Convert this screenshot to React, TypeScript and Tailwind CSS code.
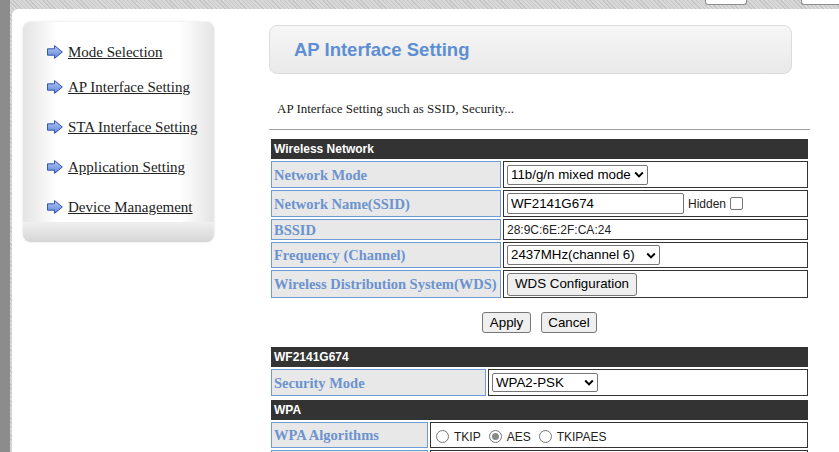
import React from 'react';

const sans = "font-['Liberation_Sans',Arial,sans-serif]";
const serif = "font-['Liberation_Serif','Times_New_Roman',serif]";

function Arrow() {
  return (
    <svg width="16" height="14" viewBox="0 0 16 14" className="shrink-0">
      <defs>
        <linearGradient id="arr" x1="0" y1="0" x2="0" y2="1">
          <stop offset="0" stopColor="#afc8f2" />
          <stop offset="1" stopColor="#5f84d8" />
        </linearGradient>
      </defs>
      <polygon points="0.5,3.8 7.5,3.8 7.5,0.6 15.4,7 7.5,13.4 7.5,10.2 0.5,10.2" fill="url(#arr)" stroke="#3556b3" strokeWidth="1" />
    </svg>
  );
}

function Chevron() {
  return (
    <svg width="10" height="7" viewBox="0 0 10 7" className="shrink-0">
      <path d="M1.2 1.5l3.8 3.8 3.8-3.8" stroke="#000" strokeWidth="1.9" fill="none" />
    </svg>
  );
}

function FakeSelect({ value, className }: { value: string; className: string }) {
  return (
    <div
      className={`inline-flex items-center justify-between border border-[#767676] rounded-[2px] bg-white pl-[3px] pr-[3px] text-[13.33px] text-black ${sans} ${className}`}
    >
      <span className="whitespace-nowrap">{value}</span>
      <Chevron />
    </div>
  );
}

function Radio({ checked, label }: { checked?: boolean; label: string }) {
  return (
    <span className="inline-flex items-center mr-[3px]">
      <span className="w-[13px] h-[13px] rounded-full border border-[#767676] bg-white flex items-center justify-center ml-[5px] mr-[5px]">
        {checked && <span className="w-[7px] h-[7px] rounded-full bg-[#8a8a8a]" />}
      </span>
      <span className="text-[12px]">{label}</span>
    </span>
  );
}

const labelCell = `bg-[#e8e8e8] border border-[#6d9bd8] ${serif} font-bold text-[14.5px] leading-[16px] text-[#6b93cf] pl-[2px] align-middle whitespace-nowrap`;
const valueCell = `border border-[#333] bg-white pl-[3px] align-middle leading-[16px] ${sans}`;
const headCell = `bg-[#333] text-white font-bold text-[12px] leading-[14px] ${sans} pl-[3px] align-middle`;

const menu = [
  { text: 'Mode Selection', mt: 'mt-[20px]' },
  { text: 'AP Interface Setting', mt: 'mt-[15px]' },
  { text: 'STA Interface Setting', mt: 'mt-[20px]' },
  { text: 'Application Setting', mt: 'mt-[20px]' },
  { text: 'Device Management', mt: 'mt-[20px]' },
];

export default function App() {
  return (
    <div className="h-[452px] w-full overflow-hidden flex bg-white">
      {/* left bar */}
      <div className="w-[10px] shrink-0 bg-[#8c8c8c]" />

      <div className="flex-1 min-w-0 flex flex-col bg-[repeating-linear-gradient(45deg,#c6c6c6_0px,#c6c6c6_1px,#d8d8d8_1px,#d8d8d8_3px)]">
        {/* top strip */}
        <div className="h-[9px] shrink-0 flex justify-end items-start">
          <div className="w-[42px] h-[5px] bg-white border border-t-0 border-[#8f8f8f] rounded-b-[3px] mr-[54px]" />
          <div className="w-[38px] h-[5px] bg-white border border-t-0 border-r-0 border-[#8f8f8f] rounded-bl-[3px]" />
        </div>

        {/* page */}
        <div className="flex-1 min-h-0 overflow-hidden bg-white rounded-tl-[6px] ml-[2px] flex items-start">
          {/* sidebar */}
          <div className="ml-[11px] mt-[13px] w-[191px] h-[220px] rounded-[8px] overflow-hidden shrink-0 flex flex-col bg-[#e9e9e9] shadow-[0_0_3px_rgba(0,0,0,0.12)]">
            <div className="h-[200px] bg-[linear-gradient(to_right,#e4e4e4,#ffffff_18%,#ffffff_82%,#e4e4e4)] flex flex-col">
              {menu.map((m) => (
                <div key={m.text} className={`${m.mt} h-[20px] flex items-center pl-[24px]`}>
                  <Arrow />
                  <a href="#" className={`ml-[5px] ${serif} text-[15px] leading-[20px] text-[#222] underline whitespace-nowrap`}>
                    {m.text}
                  </a>
                </div>
              ))}
            </div>
            <div className="flex-1 bg-[linear-gradient(to_bottom,#efefef,#d6d6d6)]" />
          </div>

          {/* content */}
          <div className="ml-[55px] mt-[16px] w-[541px] shrink-0">
            <div className="w-[523px] h-[49px] rounded-[8px] border border-[#dcdcdc] bg-[linear-gradient(to_bottom,#f6f6f6,#e9e9e9)] flex items-center pl-[24px]">
              <h1 className={`${sans} font-bold text-[18.5px] text-[#5e8fd2]`}>AP Interface Setting</h1>
            </div>

            <p className={`mt-[27px] h-[16px] leading-[16px] pl-[8px] ${serif} text-[13px] text-[#222]`}>
              AP Interface Setting such as SSID, Security...
            </p>
            <div className="mt-[12px] border-t border-[#a0a0a0]" />

            {/* Wireless Network */}
            <table className="mt-[7px] w-[541px] border-separate border-spacing-[2px]">
              <tbody>
                <tr>
                  <td colSpan={2} className={`${headCell} h-[20px]`}>Wireless Network</td>
                </tr>
                <tr>
                  <td className={`${labelCell} w-[230px] h-[27px]`}>Network Mode</td>
                  <td className={`${valueCell} h-[27px]`}>
                    <FakeSelect value="11b/g/n mixed mode" className="w-[141px] h-[20px]" />
                  </td>
                </tr>
                <tr>
                  <td className={`${labelCell} h-[27px]`}>Network Name(SSID)</td>
                  <td className={`${valueCell} h-[27px]`}>
                    <div className="flex items-center">
                      <input
                        readOnly
                        value="WF2141G674"
                        className={`w-[177px] h-[21px] border border-[#767676] rounded-[2px] px-[3px] text-[13.33px] ${sans} text-black`}
                      />
                      <span className="ml-[4px] text-[12px] text-[#222]">Hidden</span>
                      <span className="ml-[4px] w-[13px] h-[13px] border border-[#767676] rounded-[2px] bg-white" />
                    </div>
                  </td>
                </tr>
                <tr>
                  <td className={`${labelCell} h-[21px]`}>BSSID</td>
                  <td className={`${valueCell} h-[21px] text-[12px] text-[#222]`}>28:9C:6E:2F:CA:24</td>
                </tr>
                <tr>
                  <td className={`${labelCell} h-[26px]`}>Frequency (Channel)</td>
                  <td className={`${valueCell} h-[26px]`}>
                    <FakeSelect value="2437MHz(channel 6)" className="w-[153px] h-[20px]" />
                  </td>
                </tr>
                <tr>
                  <td className={`${labelCell} h-[28px]`}>Wireless Distribution System(WDS)</td>
                  <td className={`${valueCell} h-[28px]`}>
                    <button className={`w-[130px] h-[23px] bg-[#efefef] border border-[#767676] rounded-[3px] text-[13.33px] ${sans} text-black`}>
                      WDS Configuration
                    </button>
                  </td>
                </tr>
              </tbody>
            </table>

            <div className="mt-[12px] flex justify-center gap-[10px]">
              <button className={`w-[49px] h-[21px] bg-[#efefef] border border-[#767676] rounded-[3px] text-[13.33px] ${sans} text-black`}>
                Apply
              </button>
              <button className={`w-[56px] h-[21px] bg-[#efefef] border border-[#767676] rounded-[3px] text-[13.33px] ${sans} text-black`}>
                Cancel
              </button>
            </div>

            {/* SSID security */}
            <table className="mt-[12px] w-[541px] border-separate border-spacing-[2px]">
              <tbody>
                <tr>
                  <td colSpan={2} className={`${headCell} h-[20px]`}>WF2141G674</td>
                </tr>
                <tr>
                  <td className={`${labelCell} w-[215px] h-[27px]`}>Security Mode</td>
                  <td className={`${valueCell} h-[27px]`}>
                    <FakeSelect value="WPA2-PSK" className="w-[106px] h-[19px]" />
                  </td>
                </tr>
              </tbody>
            </table>

            {/* WPA */}
            <table className="w-[541px] border-separate border-spacing-[2px]">
              <tbody>
                <tr>
                  <td colSpan={2} className={`${headCell} h-[20px]`}>WPA</td>
                </tr>
                <tr>
                  <td className={`${labelCell} w-[157px] h-[26px]`}>WPA Algorithms</td>
                  <td className={`${valueCell} h-[26px] text-[#222]`}>
                    <div className="flex items-center pt-[3px] -ml-[3px]">
                      <Radio label="TKIP" />
                      <Radio label="AES" checked />
                      <Radio label="TKIPAES" />
                    </div>
                  </td>
                </tr>
                <tr>
                  <td className={`${labelCell} h-[26px]`} />
                  <td className={`${valueCell} h-[26px]`} />
                </tr>
              </tbody>
            </table>
          </div>
        </div>
      </div>
    </div>
  );
}
